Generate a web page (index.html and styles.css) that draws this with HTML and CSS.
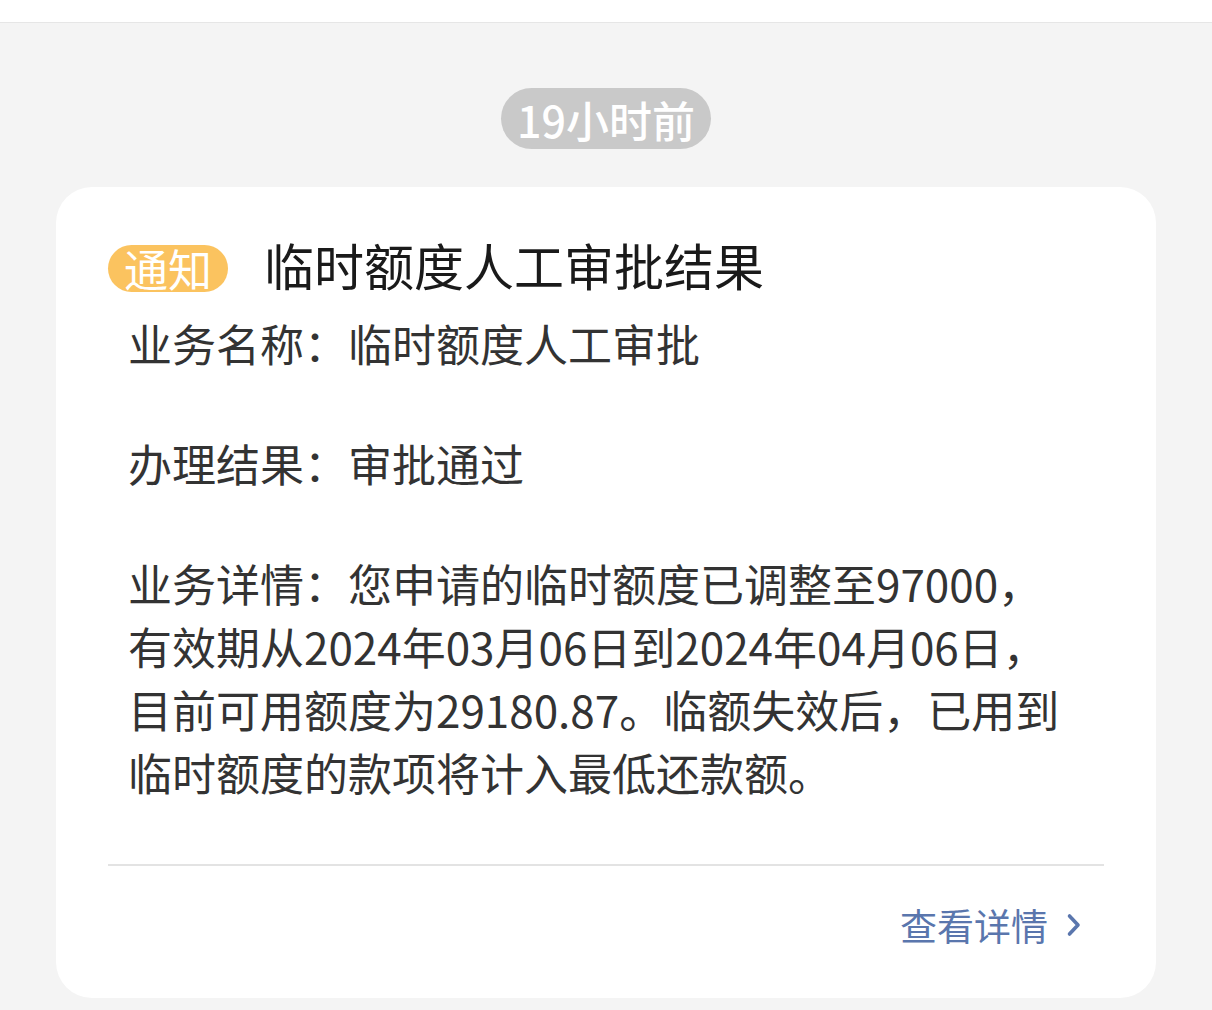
FILE: index.html
```html
<!DOCTYPE html>
<html lang="zh-CN">
<head>
    <meta charset="UTF-8">
    <meta name="viewport" content="width=device-width, initial-scale=1.0">
    <title>通知</title>
    <link rel="stylesheet" href="styles.css">
</head>
<body>
    <div class="topbar"></div>
    <div class="time-row">
        <span class="time-pill">19小时前</span>
    </div>
    <div class="card">
        <div class="card-head">
            <span class="badge">通知</span>
            <h2 class="title">临时额度人工审批结果</h2>
        </div>
        <div class="card-body">
            <p>业务名称：临时额度人工审批</p>
            <p>办理结果：审批通过</p>
            <p>业务详情：您申请的临时额度已调整至97000，<br>有效期从2024年03月06日到2024年04月06日，<br>目前可用额度为29180.87。临额失效后，已用到<br>临时额度的款项将计入最低还款额。</p>
        </div>
        <div class="card-foot">
            <a class="more" href="#">查看详情
                <svg width="16" height="26" viewBox="0 0 16 26"><path d="M3.5 4 L12 13 L3.5 22" fill="none" stroke="#5a76ad" stroke-width="3.6" stroke-linecap="round" stroke-linejoin="round"/></svg>
            </a>
        </div>
    </div>
</body>
</html>
```

FILE: styles.css
```css
body {
    background-color: #f4f4f4;
    font-family: "Noto Sans CJK SC", "Noto Sans", sans-serif;
    margin: 0;
    width: 1212px;
    height: 1010px;
    overflow: hidden;
}

.topbar {
    height: 22px;
    background-color: #fff;
    border-bottom: 1px solid #e6e6e6;
}

.time-row {
    display: flex;
    justify-content: center;
    margin-top: 65px;
}

.time-pill {
    display: flex;
    align-items: center;
    height: 61px;
    padding: 0 16px;
    background-color: #c9c9c9;
    color: #fff;
    font-size: 43px;
    font-weight: 500;
    border-radius: 31px;
    box-sizing: border-box;
}

.card {
    background-color: #fff;
    margin: 38px 56px 0;
    border-radius: 36px;
    padding: 58px 52px 0;
    height: 811px;
    box-sizing: border-box;
}

.card-head {
    display: flex;
    align-items: center;
    gap: 36px;
    height: 47px;
}

.badge {
    display: flex;
    align-items: center;
    justify-content: center;
    width: 120px;
    height: 47px;
    background-color: #fbc35f;
    color: #fff;
    font-size: 44px;
    line-height: 47px;
    border-radius: 24px;
}

.title {
    margin: 0 0 10px;
    font-size: 50px;
    font-weight: 400;
    line-height: 60px;
    color: #1a1a1a;
}

.card-body {
    padding: 20px 0 0 20px;
    color: #333;
    font-size: 44px;
    line-height: 63px;
}

.card-body p {
    margin: 0 0 57px;
}

.card-body p:last-child {
    margin-bottom: 0;
}

.card-foot {
    margin-top: 60px;
    border-top: 2px solid #e3e3e3;
    display: flex;
    justify-content: flex-end;
    padding-top: 35px;
}

.more {
    display: flex;
    align-items: center;
    gap: 18px;
    color: #5a76ad;
    font-size: 37px;
    line-height: 48px;
    text-decoration: none;
    margin-right: 22px;
}
```
